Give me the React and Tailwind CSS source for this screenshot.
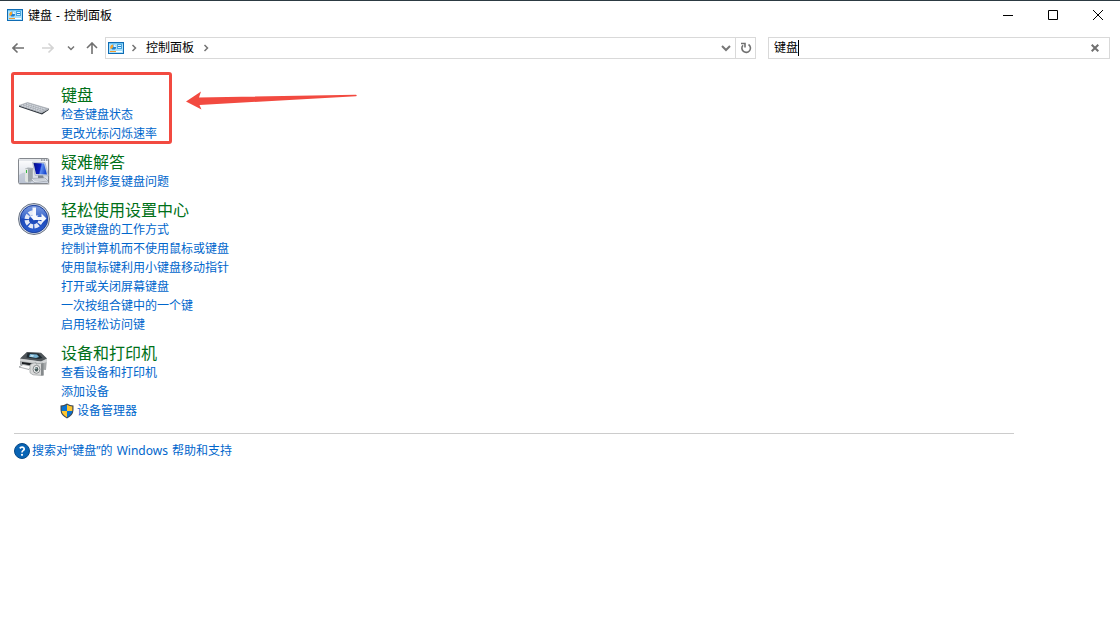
import React, { useState } from "react";

function ControlPanelIcon() {
  return (
    <svg viewBox="0 0 16 12" className="h-3 w-4 shrink-0" aria-hidden="true">
      <rect x="0.5" y="0.5" width="15" height="11" fill="#a9e0fb" stroke="#0f6cb4" />
      <path d="M1 1h14v1H1z" fill="#6cc4f2" />
      <circle cx="5.500" cy="5" r="2.600" fill="#1f80cf" />
      <path d="M5 5.500V2.800A2.700 2.700 0 0 0 2.800 7.200z" fill="#f7a52b" />
      <path d="M5.500 5V2.400A2.600 2.600 0 0 1 8.100 5z" fill="#d9f2fe" />
      <rect x="9.500" y="2.500" width="4" height="4" fill="#dff4fe" stroke="#4aa6de" />
      <path d="M10 4h3v1h-3z" fill="#1f80cf" />
      <path d="M2 9h6v1H2z" fill="#f39a2d" />
      <path d="M8 9h6v1H8z" fill="#fff" />
    </svg>
  );
}

function KeyboardIcon() {
  return (
    <svg viewBox="0 0 32 32" className="h-8 w-8" aria-hidden="true">
      <path d="M1 17.500L23.500 25l7.500-4v.8L24 26.500 1 18.800z" fill="#2b3138" />
      <path d="M1 17.500L9.500 14.500 31 20.800 23.500 25z" fill="#b4b9c0" stroke="#8b9199" strokeWidth=".5" />
      <path d="M4 17.500l18.500 5.800M6.500 16.600L25 22.400M9 15.700L27.500 21.300" stroke="#dde1e6" strokeWidth=".9" strokeDasharray="1.800 .6" />
      <path d="M5 17.100l18.500 5.800M8 16.200L26 21.800" stroke="#8b919a" strokeWidth=".4" strokeDasharray="1.600 .8" />
    </svg>
  );
}

function TroubleshootIcon() {
  return (
    <svg viewBox="0 0 32 32" className="h-8 w-8" aria-hidden="true">
      <defs>
        <linearGradient id="windowFill" x1="0" y1="0" x2="0" y2="1">
          <stop offset="0" stopColor="#fff" />
          <stop offset="1" stopColor="#cdd4e0" />
        </linearGradient>
        <linearGradient id="screenFill" x1="0" y1="0" x2="1" y2="0.200">
          <stop offset="0" stopColor="#040c86" />
          <stop offset=".55" stopColor="#0a1fc4" />
          <stop offset=".65" stopColor="#5b8cf0" />
          <stop offset="1" stopColor="#1d4cd0" />
        </linearGradient>
      </defs>
      <rect x="1" y="4" width="30.500" height="26" rx="1" fill="#cfcfcf" />
      <rect x=".5" y="3.500" width="30" height="25" rx="1" fill="url(#windowFill)" stroke="#84888e" />
      <path d="M1 4h29v2H1z" fill="#e3e6ea" />
      <path d="M23 5h1.500M25.500 5H27M28 5h1.500" stroke="#5c636e" />
      <path d="M1 20q5-4 12-2v10H1z" fill="#a9b4c5" opacity=".5" />
      <path d="M7 13.500l3-1 5 .5v13l-5 1.500-3-1z" fill="#aab1b5" />
      <path d="M7 13.500l3 .5v13.500l-3-1z" fill="#dfe4e2" />
      <path d="M8 15h1v3H8z" fill="#36b943" />
      <path d="M11 15v11M13 14.500v11" stroke="#858e94" strokeWidth=".7" />
      <path d="M14.500 7L27 7.500 30.500 21 17 20.500z" fill="#cfd6e0" stroke="#9ba4b0" strokeWidth=".5" />
      <path d="M15.500 8L26 8.500 29 19.500 18 19z" fill="url(#screenFill)" />
      <path d="M20 20.500h5l1 3h-6z" fill="#7d8692" />
      <path d="M13 23.500l14-.5 3 3-14 1.500z" fill="#e9edf2" stroke="#8d939d" strokeWidth=".6" />
      <path d="M15 24.500l12-.4M16 25.700l12-.6" stroke="#a7afba" strokeWidth=".5" />
    </svg>
  );
}

function EaseOfAccessIcon() {
  return (
    <svg viewBox="0 0 32 32" className="h-8 w-8" aria-hidden="true">
      <defs>
        <linearGradient id="easeFill" x1="0" y1="0" x2="0" y2="1">
          <stop offset="0" stopColor="#7d9ce0" />
          <stop offset=".45" stopColor="#3a67cc" />
          <stop offset=".5" stopColor="#1c49b8" />
          <stop offset="1" stopColor="#2c5fd0" />
        </linearGradient>
      </defs>
      <circle cx="16" cy="16" r="15.500" fill="#d3dae6" stroke="#6b7484" />
      <circle cx="16" cy="16" r="13.700" fill="url(#easeFill)" stroke="#1d409b" />
      <path d="M15 9.500A7 7 0 1 0 22.500 18" fill="none" stroke="#e5ebf7" strokeWidth="4.400" strokeDasharray="4.200 1.200" />
      <path d="M14.500 4.500h3.500v9.500h5.500v-3.500l5 5-5 5V17h-7.500l-1.500-2z" fill="#f5f8fd" />
      <path d="M11.500 12.500h9L16 17.500z" fill="#f5f8fd" />
    </svg>
  );
}

function PrinterIcon() {
  return (
    <svg viewBox="0 0 32 32" className="h-8 w-8" aria-hidden="true">
      <path d="M2 13L9 6l14 1 6 6-1 11-14-1-12-4z" fill="#a6a9ab" />
      <path d="M2 12.500L9 6l14 .8 6 5.700-6 3z" fill="#50565a" />
      <path d="M9.500 7l11 .6 4 4.400-4 1-12-1.500z" fill="#1f2a31" />
      <path d="M12 8l7 .5 2 2.500-3 1-7-1.200z" fill="#78b3d2" />
      <path d="M13 9l3 .3-1 1.500-3-.4z" fill="#c8e6f3" />
      <path d="M2 12.800l21 2.700 6-2.700V16l-6 2-21-3z" fill="#d3d5d6" />
      <path d="M4 16l11 1.500v2.500L4 18z" fill="#1c1f22" />
      <path d="M1 21l4-2.500 9 1.500-3 3.500z" fill="#fafafa" stroke="#85898c" strokeWidth=".7" />
      <path d="M14 17.500l4-1v1.500l7-1 .3 12.500L15 28.800l-3-2V19z" fill="#d9dada" stroke="#9a9d9f" strokeWidth=".7" />
      <path d="M23 17.500l2.500-.5v12l-2.500.5z" fill="#85898b" />
      <ellipse cx="18.500" cy="23.300" rx="3.400" ry="4" fill="#f1f1f1" stroke="#7b8082" strokeWidth=".9" />
      <ellipse cx="18.500" cy="23.300" rx="1.800" ry="2.400" fill="#4a5b5a" />
      <circle cx="18" cy="22.300" r=".8" fill="#b8d3da" />
    </svg>
  );
}

function ShieldIcon() {
  return (
    <svg viewBox="0 0 14 16" className="h-4 w-3.5 shrink-0" aria-hidden="true">
      <path d="M7 .5Q4 2.500.5 2.500V7Q.7 12.500 7 15.500 13.300 12.500 13.500 7V2.500Q10 2.500 7 .5z" fill="#414b54" />
      <path d="M7 1.800Q4.500 3.300 1.700 3.500V8H7z" fill="#0872d2" />
      <path d="M7 1.800Q9.500 3.300 12.300 3.500V8H7z" fill="#ffc52e" />
      <path d="M1.700 8Q2.500 12 7 14.300V8z" fill="#ffc52e" />
      <path d="M12.300 8Q11.500 12 7 14.300V8z" fill="#0872d2" />
    </svg>
  );
}

function HelpIcon() {
  return (
    <svg viewBox="0 0 16 16" className="h-4 w-4 shrink-0" aria-hidden="true">
      <circle cx="8" cy="8" r="7.500" fill="#0864b5" stroke="#084986" />
      <path d="M5.700 5.200Q8 3.500 9.700 4.700 11 6.300 9 7.600 8 8.300 8 9.500" fill="none" stroke="#fff" strokeWidth="1.700" />
      <circle cx="8" cy="11.800" r="1.100" fill="#fff" />
    </svg>
  );
}

function Chevron({ down = false }) {
  return (
    <svg viewBox="0 0 8 8" className="h-2 w-2 shrink-0" fill="none" stroke="#757575" strokeWidth="1.500" aria-hidden="true">
      <path d={down ? "M1 2.500l3 3 3-3" : "M2.500 1l3 3-3 3"} />
    </svg>
  );
}

const categories = [
  { title: "键盘", Icon: KeyboardIcon, links: ["检查键盘状态", "更改光标闪烁速率"], marked: true },
  { title: "疑难解答", Icon: TroubleshootIcon, links: ["找到并修复键盘问题"] },
  {
    title: "轻松使用设置中心",
    Icon: EaseOfAccessIcon,
    links: [
      "更改键盘的工作方式",
      "控制计算机而不使用鼠标或键盘",
      "使用鼠标键利用小键盘移动指针",
      "打开或关闭屏幕键盘",
      "一次按组合键中的一个键",
      "启用轻松访问键",
    ],
  },
  { title: "设备和打印机", Icon: PrinterIcon, links: ["查看设备和打印机", "添加设备", "设备管理器"], shield: "设备管理器" },
];

function Category({ title, Icon, links, marked, shield }) {
  return (
    <section className="relative flex gap-[11px]">
      <div className="pt-0.5">
        <Icon />
      </div>
      <div>
        <h2 className="text-[16px] leading-[19px] text-[#007018]">
          <a href="#" className="hover:underline">{title}</a>
        </h2>
        <ul>
          {links.map((link) => (
            <li key={link} className="h-[19px] leading-[19px]">
              <a href="#" className="flex items-center gap-[3px] text-[#0066cc] hover:underline">
                {link === shield && <span className="-ml-px"><ShieldIcon /></span>}
                {link}
              </a>
            </li>
          ))}
        </ul>
      </div>
      {marked && (
        <>
          <div className="pointer-events-none absolute -top-3.5 -left-[7px] h-[72px] w-[161px] rounded-[3px] border-3 border-[#f24a40]" />
          <svg viewBox="0 0 172 20" className="pointer-events-none absolute top-1 left-[168px] h-5 w-[172px]" aria-hidden="true">
            <path d="M0 11.500L15 1.500 13 7.500 170 4.700Q171.500 5.500 170 6.300L13.500 15 15.500 19.500z" fill="#f24a40" />
          </svg>
        </>
      )}
    </section>
  );
}

export default function App() {
  const [query, setQuery] = useState("键盘");
  return (
    <div className="min-h-screen border-t border-[#2c3a42] bg-white font-['Noto_Sans','Noto_Sans_CJK_SC',sans-serif] text-[12px] text-black">
      <header className="flex h-7 items-center justify-between pl-[7px]">
        <div className="flex items-center gap-[5px]">
          <ControlPanelIcon />
          <h1 className="flex gap-1 pt-0.5">
            <span>键盘</span>
            <span>-</span>
            <span>控制面板</span>
          </h1>
        </div>
        <div className="flex h-full">
          <button aria-label="最小化" className="flex w-11 items-center justify-center">
            <svg viewBox="0 0 10 10" className="h-2.5 w-2.5"><path d="M0 5.500h10" stroke="#000" /></svg>
          </button>
          <button aria-label="最大化" className="flex w-[46px] items-center justify-center">
            <svg viewBox="0 0 10 10" className="h-2.5 w-2.5"><path d="M.5.5h9v9h-9z" fill="none" stroke="#000" /></svg>
          </button>
          <button aria-label="关闭" className="flex w-11 items-center justify-center">
            <svg viewBox="0 0 10 10" className="h-2.5 w-2.5"><path d="M0 0l10 10M10 0L0 10" stroke="#000" /></svg>
          </button>
        </div>
      </header>

      <div className="mt-2 flex h-[22px] pr-2.5">
        <nav className="flex w-[105px] shrink-0 items-center pl-3" aria-label="导航">
          <button aria-label="后退">
            <svg viewBox="0 0 12 12" className="h-3 w-3" fill="none" stroke="#707070" strokeWidth="1.600"><path d="M12 6H1M5.500 1.500L1 6l4.500 4.500" /></svg>
          </button>
          <button aria-label="前进" className="ml-[18px]">
            <svg viewBox="0 0 12 12" className="h-3 w-3" fill="none" stroke="#d4d4d4" strokeWidth="1.600"><path d="M0 6h11M6.500 1.500L11 6l-4.500 4.500" /></svg>
          </button>
          <button aria-label="最近的位置" className="ml-[13px]"><Chevron down /></button>
          <button aria-label="向上" className="ml-[11px]">
            <svg viewBox="0 0 12 12" className="h-3 w-3" fill="none" stroke="#707070" strokeWidth="1.600"><path d="M6 12V1M1 6l5-5 5 5" /></svg>
          </button>
        </nav>
        <div className="flex min-w-0 flex-1 border border-[#d9d9d9]">
          <div className="flex min-w-0 flex-1 items-center pl-0.5">
            <ControlPanelIcon />
            <button aria-label="展开" className="ml-1.5"><Chevron /></button>
            <a href="#" className="mx-2 leading-5">控制面板</a>
            <button aria-label="展开控制面板"><Chevron /></button>
          </div>
          <button aria-label="以前的位置" className="flex w-[19px] items-center justify-center">
            <svg viewBox="0 0 10 10" className="h-2.5 w-2.5" fill="none" stroke="#777" strokeWidth="2"><path d="M1 3l4 4 4-4" /></svg>
          </button>
          <button aria-label="刷新" className="flex w-5 items-center justify-center border-l border-[#d9d9d9]">
            <svg viewBox="0 0 12 12" className="h-3 w-3" fill="none" stroke="#707070" strokeWidth="1.600">
              <path d="M8.500 2.500A4.300 4.300 0 1 1 3 3.200" />
              <path d="M1 1.500h4v4" />
            </svg>
          </button>
        </div>
        <div className="relative ml-3 flex w-[342px] border border-[#d9d9d9]">
          <input
            aria-label="搜索控制面板"
            value={query}
            onChange={(event) => setQuery(event.target.value)}
            className="min-w-0 flex-1 pl-[5px] caret-transparent outline-none"
          />
          <span className="absolute top-0.5 left-[29px] h-4 w-px bg-black" />
          <button aria-label="清除" onClick={() => setQuery("")} className="flex w-7 items-center justify-center">
            <svg viewBox="0 0 8 8" className="h-2 w-2" stroke="#707070" strokeWidth="2"><path d="M.7.7l6.600 6.600M7.300.7L.7 7.300" /></svg>
          </button>
        </div>
      </div>

      <main className="px-3.5 pt-[27px]">
        <div className="flex flex-col gap-2.5 pl-1">
          {categories.map((category) => (
            <Category key={category.title} {...category} />
          ))}
        </div>
        <hr className="mt-[13px] max-w-[1000px] border-[#cccccc]" />
        <a href="#" className="mt-2 flex w-fit items-center gap-0.5 leading-[18px] text-[#0066cc] hover:underline">
          <HelpIcon />
          <span className="flex gap-1">
            <span>搜索对“键盘”的</span>
            <span>Windows</span>
            <span>帮助和支持</span>
          </span>
        </a>
      </main>
    </div>
  );
}
